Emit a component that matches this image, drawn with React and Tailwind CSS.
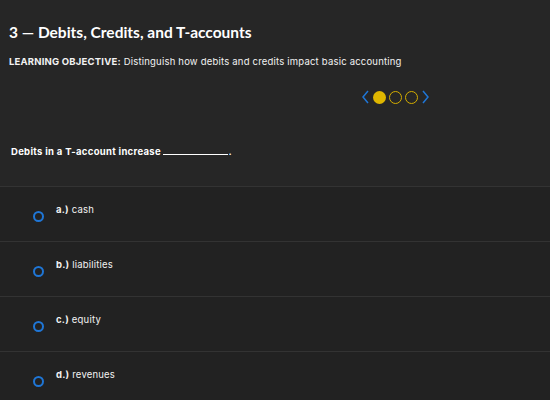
import React, { useState } from 'react';

const options = [
  { id: 'a', label: 'a.)', text: 'cash' },
  { id: 'b', label: 'b.)', text: 'liabilities' },
  { id: 'c', label: 'c.)', text: 'equity' },
  { id: 'd', label: 'd.)', text: 'revenues' },
];

function Chevron({ dir }) {
  return (
    <svg width="9" height="14" viewBox="0 0 9 14" fill="none">
      <path
        d={dir === 'left' ? 'M7 1 L2 7 L7 13' : 'M2 1 L7 7 L2 13'}
        stroke="#1f76d6"
        strokeWidth="1.5"
      />
    </svg>
  );
}

export default function App() {
  const [selected, setSelected] = useState(null);

  return (
    <div className="w-[550px] h-[400px] overflow-hidden bg-[#222222] text-white" style={{ fontFamily: 'Inter, "Open Sans", sans-serif' }}>
      <section className="h-[187px] bg-[#262626] border-b border-[#333333] px-[9px] pt-[21px]">
        <h1 className="text-[15.5px] font-bold leading-[22px]" style={{ fontFamily: 'Lato, sans-serif' }}>3 — Debits, Credits, and T-accounts</h1>
        <p className="mt-[13px] text-[9.5px] leading-[12px] tracking-[0.2px] text-[#f2f2f2]">
          <span className="font-bold">LEARNING OBJECTIVE:</span> Distinguish how debits and credits impact basic accounting
        </p>
        <div className="mt-[22px] flex items-center gap-[3px] pl-[352px]">
          <Chevron dir="left" />
          <span className="w-[13px] h-[13px] rounded-full bg-[#dfb600]" />
          <span className="w-[13px] h-[13px] rounded-full border-[1.5px] border-[#d4ad00]" />
          <span className="w-[13px] h-[13px] rounded-full border-[1.5px] border-[#d4ad00]" />
          <Chevron dir="right" />
        </div>
        <p className="mt-[42px] pl-[2px] text-[9.5px] font-bold leading-[12px] tracking-[0.3px]">
          Debits in a T-account increase <span className="inline-block w-[65px] border-b border-white align-baseline" />.
        </p>
      </section>
      {options.map((o) => (
        <label
          key={o.id}
          className="flex h-[55px] border-b border-[#333333] cursor-pointer"
          onClick={() => setSelected(o.id)}
        >
          <span className={`mt-[24px] ml-[33px] w-[11px] h-[11px] rounded-full border-2 border-[#1f76d6] ${selected === o.id ? 'bg-[#1f76d6]' : ''}`} />
          <span className="ml-[12px] mt-[17px] text-[9.5px] leading-[12px] tracking-[0.2px] text-[#f2f2f2]">
            <span className="font-bold">{o.label}</span> {o.text}
          </span>
        </label>
      ))}
    </div>
  );
}
